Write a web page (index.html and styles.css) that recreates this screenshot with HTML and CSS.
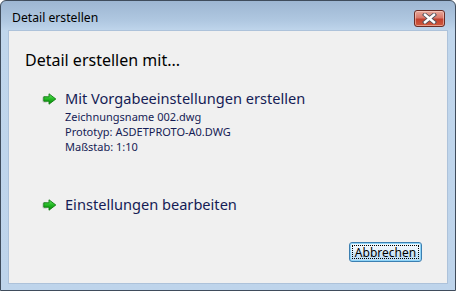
FILE: index.html
```html
<!DOCTYPE html>
<html lang="de">
<head>
<meta charset="utf-8">
<title>Detail erstellen</title>
<link rel="stylesheet" href="styles.css">
</head>
<body>
<div class="window">
  <div class="titlebar">
    <span class="title">Detail erstellen</span>
    <button class="close" aria-label="Schließen">
      <svg width="17" height="11" viewBox="0 0 17 11">
        <path d="M4 1.8 L13 9.2 M13 1.8 L4 9.2" stroke="#50505a" stroke-width="4.2" stroke-linecap="square" fill="none"/>
        <path d="M4 1.8 L13 9.2 M13 1.8 L4 9.2" stroke="#ffffff" stroke-width="2.4" stroke-linecap="square" fill="none"/>
      </svg>
    </button>
  </div>
  <div class="client">
    <div class="heading">Detail erstellen mit...</div>
    <div class="option">
      <svg class="arrow" width="15" height="12" viewBox="0 0 15 12">
        <defs>
          <linearGradient id="g1" x1="0" y1="0" x2="0" y2="1">
            <stop offset="0" stop-color="#6ae86a"/>
            <stop offset="0.5" stop-color="#22b822"/>
            <stop offset="1" stop-color="#0a8a0a"/>
          </linearGradient>
        </defs>
        <ellipse cx="3" cy="6.5" rx="3.2" ry="3.4" fill="#d2d2d2"/>
        <path d="M1.8 3.8 H7 V0.8 L13.8 6 L7 11.2 V8.2 H1.8 Z" fill="url(#g1)" stroke="#0d7c10" stroke-width="0.9" stroke-linejoin="round"/>
      </svg>
      <div class="option-text">
        <div class="option-main">Mit Vorgabeeinstellungen erstellen</div>
        <div class="option-sub">Zeichnungsname 002.dwg</div>
        <div class="option-sub">Prototyp: ASDETPROTO-A0.DWG</div>
        <div class="option-sub">Maßstab: 1:10</div>
      </div>
    </div>
    <div class="option option-second">
      <svg class="arrow" width="15" height="12" viewBox="0 0 15 12">
        <defs>
          <linearGradient id="g2" x1="0" y1="0" x2="0" y2="1">
            <stop offset="0" stop-color="#6ae86a"/>
            <stop offset="0.5" stop-color="#22b822"/>
            <stop offset="1" stop-color="#0a8a0a"/>
          </linearGradient>
        </defs>
        <ellipse cx="3" cy="6.5" rx="3.2" ry="3.4" fill="#d2d2d2"/>
        <path d="M1.8 3.8 H7 V0.8 L13.8 6 L7 11.2 V8.2 H1.8 Z" fill="url(#g2)" stroke="#0d7c10" stroke-width="0.9" stroke-linejoin="round"/>
      </svg>
      <div class="option-text">
        <div class="option-main">Einstellungen bearbeiten</div>
      </div>
    </div>
    <div class="footer">
      <button class="btn">Abbrechen</button>
    </div>
  </div>
</div>
</body>
</html>
```
FILE: styles.css
```css
html, body {
  margin: 0;
  padding: 0;
  background: #ffffff;
}
body {
  font-family: "Segoe UI", "Noto Sans", "Open Sans", sans-serif;
}
.window {
  box-sizing: border-box;
  width: 456px;
  height: 291px;
  border: 1px solid #3f4c5c;
  border-radius: 6px 6px 0 0;
  background: linear-gradient(to bottom, #9db6d2 0px, #b0c8e1 20px, #c0d6ec 30px, #bed4eb 100%);
  box-shadow: 0 1px 0 #2fc6e6;
  display: flex;
  flex-direction: column;
}
.titlebar {
  height: 29px;
  display: flex;
  align-items: flex-start;
  justify-content: space-between;
  padding: 0 10px 0 11px;
}
.title {
  font-size: 12.2px;
  line-height: 16px;
  color: #000;
  padding-top: 9px;
}
.close {
  margin-top: 9px;
  width: 31px;
  height: 17px;
  padding: 0;
  border: 1px solid #6a2c25;
  border-radius: 3px;
  background: linear-gradient(to bottom, #e8a99b 0%, #d9786a 45%, #c2412f 55%, #cf5a3e 100%);
  box-shadow: inset 0 0 0 1px rgba(255, 220, 210, 0.5);
  display: flex;
  align-items: center;
  justify-content: center;
}
.close svg {
  display: block;
}
.client {
  flex: 1;
  margin: 0 7px 6px 7px;
  background: #f0f0f0;
  border: 1px solid #adc2da;
  padding: 19px 16px 0 16px;
  display: flex;
  flex-direction: column;
}
.heading {
  font-size: 16px;
  line-height: 20px;
  color: #000;
}
.option {
  display: flex;
  align-items: flex-start;
  margin-top: 18px;
  padding-left: 17px;
  color: #151c55;
}
.option-second {
  margin-top: 40px;
}
.arrow {
  flex: none;
  margin-top: 5px;
  margin-right: 8px;
}
.option-main {
  font-size: 14.6px;
  line-height: 20px;
  margin-bottom: 1px;
}
.option-sub {
  font-size: 11px;
  line-height: 15px;
}
.footer {
  display: flex;
  justify-content: flex-end;
  margin-top: 27px;
  padding-right: 9px;
}
.btn {
  width: 73px;
  height: 20px;
  padding: 0;
  font-family: inherit;
  font-size: 12px;
  color: #000;
  border: 1px solid #3c7fb1;
  border-radius: 3px;
  background: linear-gradient(to bottom, #f2f8fd 0%, #e4f1fb 50%, #cfe6f8 51%, #bddcf5 100%);
  box-shadow: inset 0 0 0 1px #8fd4f7;
  outline: 1px dotted #000;
  outline-offset: -4px;
}
```
